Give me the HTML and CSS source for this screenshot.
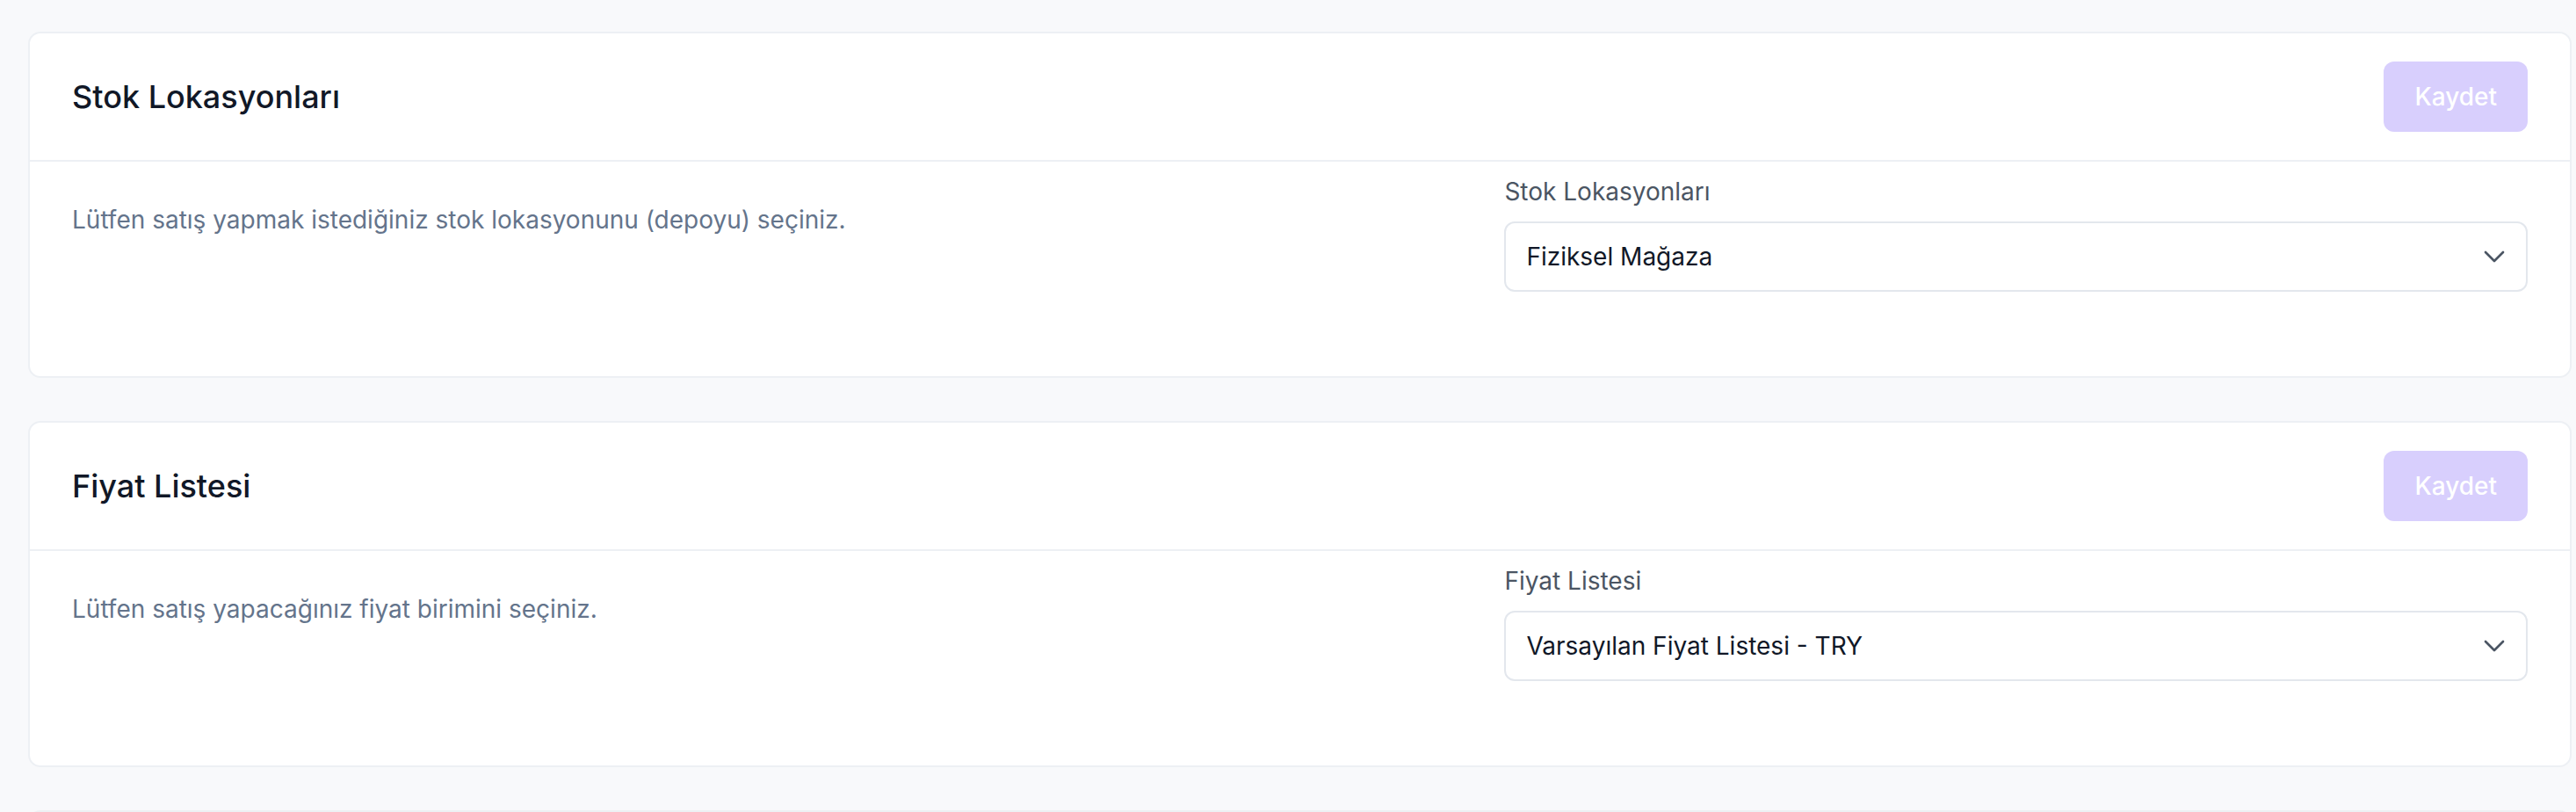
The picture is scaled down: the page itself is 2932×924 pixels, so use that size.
FILE: index.html
```html
<!DOCTYPE html>
<html lang="tr">
<head>
<meta charset="utf-8">
<title>Ayarlar</title>
<link rel="stylesheet" href="styles.css">
</head>
<body>
<main class="page">
  <section class="card">
    <header class="card-header">
      <h2 class="card-title">Stok Lokasyonları</h2>
      <button class="btn-save" type="button" disabled>Kaydet</button>
    </header>
    <div class="card-body">
      <p class="desc">Lütfen satış yapmak istediğiniz stok lokasyonunu (depoyu) seçiniz.</p>
      <div class="field">
        <label class="field-label">Stok Lokasyonları</label>
        <div class="select">
          <span class="select-value">Fiziksel Mağaza</span>
          <svg class="chev" viewBox="0 0 24 24" fill="none" stroke="currentColor" stroke-width="2" stroke-linecap="round" stroke-linejoin="round"><path d="m19.5 8.25-7.5 7.5-7.5-7.5"/></svg>
        </div>
      </div>
    </div>
  </section>

  <section class="card">
    <header class="card-header">
      <h2 class="card-title">Fiyat Listesi</h2>
      <button class="btn-save" type="button" disabled>Kaydet</button>
    </header>
    <div class="card-body">
      <p class="desc">Lütfen satış yapacağınız fiyat birimini seçiniz.</p>
      <div class="field">
        <label class="field-label">Fiyat Listesi</label>
        <div class="select">
          <span class="select-value">Varsayılan Fiyat Listesi - TRY</span>
          <svg class="chev" viewBox="0 0 24 24" fill="none" stroke="currentColor" stroke-width="2" stroke-linecap="round" stroke-linejoin="round"><path d="m19.5 8.25-7.5 7.5-7.5-7.5"/></svg>
        </div>
      </div>
    </div>
  </section>

  <section class="card card-empty"></section>
</main>
</body>
</html>
```

FILE: styles.css
```css
* { box-sizing: border-box; }

html, body {
  margin: 0;
  padding: 0;
  background: #f8f9fb;
  font-family: Inter, "Noto Sans", "Liberation Sans", sans-serif;
  color: #111827;
}

.page {
  display: flex;
  flex-direction: column;
  gap: 49px;
  padding: 36px 5px 0 32px;
  height: 924px;
  overflow: hidden;
}

.card {
  flex: none;
  background: #ffffff;
  border: 2px solid #edf0f4;
  border-radius: 14px;
}

.card-empty {
  height: 300px;
}

.card-header {
  display: flex;
  align-items: center;
  justify-content: space-between;
  padding: 32px 48px;
  border-bottom: 2px solid #edf0f4;
}

.card-title {
  margin: 0;
  font-size: 36px;
  line-height: 56px;
  font-weight: 500;
  color: #111827;
}

.btn-save {
  height: 80px;
  padding: 0 35px;
  border: none;
  border-radius: 12px;
  background: #d8cffd;
  color: #ffffff;
  font-family: inherit;
  font-size: 28px;
  font-weight: 500;
  cursor: not-allowed;
}

.card-body {
  display: grid;
  grid-template-columns: 7fr 5fr;
  padding: 14px 48px 96px;
}

.desc {
  margin: 32px 0 0;
  font-size: 28px;
  line-height: 40px;
  color: #64748b;
}

.field {
  display: flex;
  flex-direction: column;
}

.field-label {
  font-size: 28px;
  line-height: 40px;
  color: #4b5563;
  margin-bottom: 14px;
}

.select {
  display: flex;
  align-items: center;
  justify-content: space-between;
  height: 80px;
  padding: 0 20px 0 23px;
  border: 2px solid #e3e7ed;
  border-radius: 12px;
  background: #ffffff;
}

.select-value {
  font-size: 28px;
  color: #111827;
}

.chev {
  width: 32px;
  height: 32px;
  color: #4b5563;
}
```
